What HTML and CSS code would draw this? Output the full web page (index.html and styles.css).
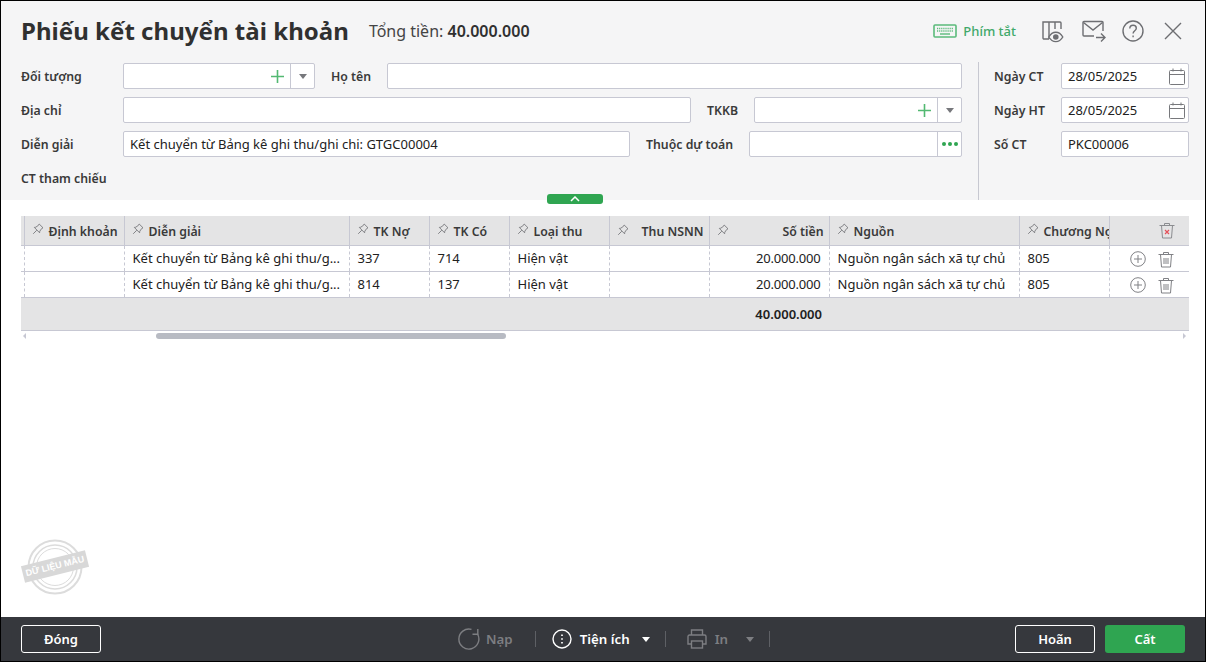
FILE: index.html
```html
<!DOCTYPE html>
<html lang="vi">
<head>
<meta charset="utf-8">
<title>Phiếu kết chuyển tài khoản</title>
<link rel="stylesheet" href="styles.css">
</head>
<body>
<div class="app">
  <header class="head">
    <div class="title-row">
      <h1 class="title">Phiếu kết chuyển tài khoản</h1>
      <div class="total">Tổng tiền: <b>40.000.000</b></div>
      <div class="tools">
        <span class="shortcut">
          <svg width="24" height="14" viewBox="0 0 24 14"><rect x="1" y="1" width="22" height="12" rx="1" fill="none" stroke="#5bbb7b" stroke-width="1.6"/><path d="M4 4.5h16M4 7h16" stroke="#5bbb7b" stroke-width="1.4" stroke-dasharray="1.2 .9"/><path d="M7 10h10" stroke="#5bbb7b" stroke-width="1.4"/></svg>
          Phím tắt
        </span>
        <svg class="t1" width="24" height="24" viewBox="0 0 24 24" fill="none" stroke="#6d6e72" stroke-width="1.4"><path d="M8 20H3a1 1 0 0 1-1-1V3h17a1 1 0 0 1 1 1v6M8 3v17M14 3v7"/><path d="M7.8 18c2-3.6 4-4.8 7-4.8s5 1.2 7 4.8c-2 3.4-4 4.6-7 4.6s-5-1.2-7-4.6z" fill="#f5f5f6" stroke-width="1.4"/><circle cx="14.8" cy="18" r="2.8" fill="#6d6e72" stroke="none"/></svg>
        <svg class="t2" width="24" height="22" viewBox="0 0 24 22" fill="none" stroke="#6d6e72" stroke-width="1.4"><path d="M21 11V2.5a1 1 0 0 0-1-1H2a1 1 0 0 0-1 1V15a1 1 0 0 0 1 1h10"/><path d="M1.5 2.5 11 10l9.5-7.500"/><path d="M14 17.500h9M19 13.500l4 4-4 4"/></svg>
        <svg class="t3" width="22" height="22" viewBox="0 0 22 22" fill="none" stroke="#6d6e72" stroke-width="1.4"><circle cx="11" cy="11" r="10"/><path d="M7.800 8.500c0-2 1.500-3.200 3.300-3.200s3.200 1.200 3.200 2.900c0 2.500-3.200 2.600-3.200 5.300"/><path d="M11.100 15.400v1.800"/></svg>
        <svg class="t4" width="20" height="20" viewBox="0 0 20 20" stroke="#6d6e72" stroke-width="1.400"><path d="M2 2l16 16M18 2 2 18"/></svg>
      </div>
    </div>
    <div class="form-wrap">
      <div class="form-left">
        <div class="row">
          <label class="lbl">Đối tượng</label>
          <div class="box w192">
            <span class="fill"></span>
            <svg class="plus" width="13" height="13" viewBox="0 0 13 13"><path d="M6.500 0v13M0 6.500h13" stroke="#53b972" stroke-width="1.600"/></svg>
            <span class="cell"><i class="caret"></i></span>
          </div>
          <label class="lbl l2 wa">Họ tên</label>
          <div class="box grow"></div>
        </div>
        <div class="row">
          <label class="lbl">Địa chỉ</label>
          <div class="box grow"></div>
          <label class="lbl l2 wb">TKKB</label>
          <div class="box w208">
            <span class="fill"></span>
            <svg class="plus" width="13" height="13" viewBox="0 0 13 13"><path d="M6.500 0v13M0 6.500h13" stroke="#53b972" stroke-width="1.600"/></svg>
            <span class="cell"><i class="caret"></i></span>
          </div>
        </div>
        <div class="row">
          <label class="lbl">Diễn giải</label>
          <div class="box grow"><span class="val">Kết chuyển từ Bảng kê ghi thu/ghi chi: GTGC00004</span></div>
          <label class="lbl l2 wc">Thuộc dự toán</label>
          <div class="box w213">
            <span class="fill"></span>
            <span class="cell"><i class="dots"></i></span>
          </div>
        </div>
        <div class="row ref"><label class="lbl">CT tham chiếu</label></div>
      </div>
      <div class="form-right">
        <div class="row">
          <label class="lbl lr">Ngày CT</label>
          <div class="box date"><span class="val fill">28/05/2025</span>
            <svg class="cal" width="16" height="17" viewBox="0 0 16 17" fill="none" stroke="#77787c"><rect x=".5" y="2.500" width="15" height="14" rx="1"/><path d="M.5 6.500h15M4 .5v3M12 .5v3"/></svg>
          </div>
        </div>
        <div class="row">
          <label class="lbl lr">Ngày HT</label>
          <div class="box date"><span class="val fill">28/05/2025</span>
            <svg class="cal" width="16" height="17" viewBox="0 0 16 17" fill="none" stroke="#77787c"><rect x=".5" y="2.500" width="15" height="14" rx="1"/><path d="M.5 6.500h15M4 .5v3M12 .5v3"/></svg>
          </div>
        </div>
        <div class="row">
          <label class="lbl lr">Số CT</label>
          <div class="box date"><span class="val">PKC00006</span></div>
        </div>
      </div>
    </div>
    <button class="collapse" type="button"><svg width="10" height="6" viewBox="0 0 10 6" fill="none" stroke="#fff" stroke-width="1.500"><path d="M1 5l4-4 4 4"/></svg></button>
  </header>

  <main class="content">
    <table class="grid">
      <colgroup>
        <col class="c0"><col class="c1"><col class="c2"><col class="c3"><col class="c3"><col class="c1"><col class="c1"><col class="c4"><col class="c5"><col class="c6"><col class="c7">
      </colgroup>
      <thead>
        <tr>
          <th></th>
          <th><svg class="pin"><use href="#pin"/></svg>Định khoản</th>
          <th><svg class="pin"><use href="#pin"/></svg>Diễn giải</th>
          <th><svg class="pin"><use href="#pin"/></svg>TK Nợ</th>
          <th><svg class="pin"><use href="#pin"/></svg>TK Có</th>
          <th><svg class="pin"><use href="#pin"/></svg>Loại thu</th>
          <th class="split"><svg class="pin"><use href="#pin"/></svg><span class="r">Thu NSNN</span></th>
          <th class="split"><svg class="pin"><use href="#pin"/></svg><span class="r">Số tiền</span></th>
          <th><svg class="pin"><use href="#pin"/></svg>Nguồn</th>
          <th class="clip"><svg class="pin"><use href="#pin"/></svg>Chương Nợ</th>
          <th class="ic">
            <svg class="trash-h" width="16" height="17" viewBox="0 0 16 17" fill="none" stroke="#8b8c90"><path d="M.5 3.500h15M5.500 3V1.500h5V3M2.500 3.500l1 12.500h9l1-12.500" stroke-width="1"/><path d="M6 8l4 4M10 8l-4 4" stroke="#e4505a" stroke-width="1.200"/></svg>
          </th>
        </tr>
      </thead>
      <tbody>
        <tr>
          <td></td><td></td><td>Kết chuyển từ Bảng kê ghi thu/g...</td><td>337</td><td>714</td><td>Hiện vật</td><td></td><td class="num">20.000.000</td><td>Nguồn ngân sách xã tự chủ</td><td>805</td>
          <td class="ic">
            <svg class="add" width="16" height="16" viewBox="0 0 16 16" fill="none" stroke="#808185"><circle cx="8" cy="8" r="7.300"/><path d="M8 4v8M4 8h8"/></svg>
            <svg class="del" width="16" height="17" viewBox="0 0 16 17" fill="none" stroke="#808185"><path d="M.5 3.500h15M5.500 3V1.500h5V3M2.500 3.500l1 12.500h9l1-12.500M6 7v6M8 7v6M10 7v6"/></svg>
          </td>
        </tr>
        <tr>
          <td></td><td></td><td>Kết chuyển từ Bảng kê ghi thu/g...</td><td>814</td><td>137</td><td>Hiện vật</td><td></td><td class="num">20.000.000</td><td>Nguồn ngân sách xã tự chủ</td><td>805</td>
          <td class="ic">
            <svg class="add" width="16" height="16" viewBox="0 0 16 16" fill="none" stroke="#808185"><circle cx="8" cy="8" r="7.300"/><path d="M8 4v8M4 8h8"/></svg>
            <svg class="del" width="16" height="17" viewBox="0 0 16 17" fill="none" stroke="#808185"><path d="M.5 3.500h15M5.500 3V1.500h5V3M2.500 3.500l1 12.500h9l1-12.500M6 7v6M8 7v6M10 7v6"/></svg>
          </td>
        </tr>
      </tbody>
      <tfoot>
        <tr>
          <td colspan="8" class="sum">40.000.000</td><td colspan="3"></td>
        </tr>
      </tfoot>
    </table>
    <div class="scroll">
      <i class="arr left"></i>
      <span class="thumb"></span>
      <i class="arr right"></i>
    </div>
    <svg class="defs" width="0" height="0"><symbol id="pin" viewBox="0 0 12 12"><path d="M7.200 1 11 4.800 9.800 5.400 7.800 8.200 7.600 9.800 2.300 4.400 3.800 4.200 6.600 2.200zM4.800 7.200 1.200 10.800" fill="none" stroke="#77787c" stroke-width=".9"/></symbol></svg>
    <div class="stamp">
      <svg width="56" height="56" viewBox="0 0 56 56" fill="none" stroke="#dcdcdc"><circle cx="28" cy="28" r="26.500" stroke-width="2"/><circle cx="28" cy="28" r="22" stroke-width="1.500"/><circle cx="28" cy="28" r="18.500" stroke-width="1"/></svg>
      <span class="stamp-text">DỮ LIỆU MẪU</span>
    </div>
  </main>

  <footer class="bar">
    <button class="btn ghost" type="button">Đóng</button>
    <div class="center">
      <span class="act off">
        <svg width="22" height="22" viewBox="0 0 22 22" fill="none" stroke="#7d7e82" stroke-width="1.400"><path d="M19.500 6A10 10 0 1 1 13.500 1.400"/><path d="M19.800 1v5.300h-5.300"/></svg>
        Nạp
      </span>
      <i class="sep s1"></i>
      <span class="act on">
        <svg width="20" height="20" viewBox="0 0 20 20" fill="none" stroke="#fff" stroke-width="1.400"><circle cx="10" cy="10" r="9"/><path d="M10 5.500v1.500M10 9.300v1.500M10 13v1.500" stroke-width="1.700"/></svg>
        Tiện ích
      </span>
      <i class="tri white"></i>
      <i class="sep s2"></i>
      <span class="act off print">
        <svg width="20" height="20" viewBox="0 0 20 20" fill="none" stroke="#7d7e82" stroke-width="1.400"><path d="M4.500 6V1h11v5M4.500 15H1V7.500a1.500 1.500 0 0 1 1.500-1.500h15A1.500 1.500 0 0 1 19 7.500V15h-3.500"/><rect x="4.500" y="12" width="11" height="7"/></svg>
        In
      </span>
      <i class="tri grey"></i>
      <i class="sep s3"></i>
    </div>
    <div class="right">
      <button class="btn ghost" type="button">Hoãn</button>
      <button class="btn green" type="button">Cất</button>
    </div>
  </footer>
</div>
</body>
</html>
```

FILE: styles.css
```css
* { box-sizing: border-box; }
html, body { margin: 0; padding: 0; }
body { font-family: "Noto Sans", "Open Sans", sans-serif; font-size: 13px; color: #212121; background: #fff; }
.app { width: 1206px; height: 662px; border: 1px solid #000; display: flex; flex-direction: column; overflow: hidden; }

.head { height: 199px; background: #f5f5f6; position: relative; flex: none; }
.title-row { height: 61px; display: flex; align-items: center; padding: 0 22px 2px 20px; }
.title { margin: 0; font-size: 24px; font-weight: 700; color: #303030; line-height: 32px; letter-spacing: .04px; }
.total { margin-left: 20px; font-size: 16px; color: #444; }
.total b { font-weight: 600; color: #303030; font-size: 16px; }
.tools { margin-left: auto; display: flex; align-items: center; }
.shortcut { display: flex; align-items: center; gap: 6px; color: #41a96a; font-weight: 500; margin-right: 25px; }
.t2 { margin-left: 17px; }
.t3 { margin-left: 16px; }
.t4 { margin-left: 19px; }

.form-wrap { display: flex; height: 138px; }
.form-left { width: 978px; padding: 1px 16px 0 20px; border-right: 1px solid #c7c8d1; }
.form-right { flex: 1; padding: 1px 16px 0 15px; }
.row { display: flex; align-items: center; height: 26px; margin-bottom: 8px; }
.ref { height: 26px; margin-bottom: 0; }
.lbl { font-weight: 600; color: #3a3a3a; flex: none; width: 102px; font-size: 12.300px; }
.l2 { margin-left: 16px; }
.wa { width: 56px; }
.wb { width: 47px; }
.wc { width: 103px; }
.lr { width: 67px; }

.box { height: 26px; background: #fff; border: 1px solid #c7c8d3; border-radius: 2px; display: flex; align-items: center; flex: none; }
.grow { flex: 1; }
.fill { flex: 1; }
.w192 { width: 192px; }
.w208 { width: 208px; }
.w213 { width: 213px; }
.date { width: 128px; }
.val { padding-left: 6px; color: #212121; white-space: nowrap; }
.plus { margin-right: 6px; }
.cal { margin-right: 3px; }
.cell { width: 24px; height: 24px; border-left: 1px solid #c7c8d3; display: flex; align-items: center; justify-content: center; }
.caret { width: 0; height: 0; border-left: 4px solid transparent; border-right: 4px solid transparent; border-top: 5px solid #77787c; }
.dots { width: 4px; height: 4px; border-radius: 50%; background: #2fa551; box-shadow: -6px 0 #2fa551, 6px 0 #2fa551; }

.collapse { position: absolute; left: 546px; bottom: -4px; width: 56px; height: 10px; padding: 0; border: 0; border-radius: 3px 3px 3px 3px; background: #2fa551; display: flex; align-items: center; justify-content: center; }

.content { flex: 1; position: relative; padding: 16px 16px 0 20px; }
.grid { width: 1168px; table-layout: fixed; border-collapse: collapse; }
.c0 { width: 3px; } .c1 { width: 100px; } .c2 { width: 225px; } .c3 { width: 80px; } .c4 { width: 120px; } .c5 { width: 190px; } .c6 { width: 90px; } .c7 { width: 80px; }
.grid th { height: 29px; background: #e4e4e5; font-weight: 600; font-size: 12.300px; color: #3a3a3a; text-align: left; padding: 2px 0 0 7px; border-right: 1px solid #c7c8d3; border-bottom: 1px solid #c7c8d3; white-space: nowrap; overflow: hidden; }
.grid th:first-child, .grid td:first-child { padding: 0; }
.grid th:last-child { border-right: 0; }
.pin { width: 12px; height: 12px; margin-right: 5px; vertical-align: -1px; position: relative; top: -2px; }
.split .r { float: right; padding-right: 5px; }
.split .pin { float: left; top: 0; margin-top: 1px; }
.grid td { height: 26px; padding: 0 0 0 8px; border-right: 1px dashed #c7c8d3; border-bottom: 1px solid #c7c8d3; white-space: nowrap; overflow: hidden; }
.grid td:last-child { border-right: 0; }
.grid .num { text-align: right; padding: 0 8px 0 0; letter-spacing: -.2px; }
.grid .ic { text-align: left; padding: 0; }
.grid th.ic { text-align: right; padding-right: 14px; }
.trash-h { display: inline-block; vertical-align: middle; }
.add { margin-left: 20px; vertical-align: middle; }
.del { margin-left: 9px; vertical-align: middle; }
.grid tfoot td { height: 33px; background: #e4e4e5; border-right: 0; font-weight: 600; color: #212121; }
.grid tfoot .sum { text-align: right; padding: 0 7px 0 0; }

.scroll { height: 8px; margin-top: 1px; position: relative; display: flex; align-items: center; }
.thumb { width: 350px; height: 6px; border-radius: 3px; background: #b8bbc3; margin-left: 135px; }
.arr { width: 0; height: 0; border-top: 3px solid transparent; border-bottom: 3px solid transparent; }
.arr.left { border-right: 3px solid #c7c8d3; margin-left: 2px; position: absolute; left: 0; }
.arr.right { border-left: 3px solid #c7c8d3; position: absolute; right: 3px; }
.defs { position: absolute; }

.stamp { position: absolute; left: 26px; top: 339px; width: 56px; height: 56px; }
.stamp svg { display: block; }
.stamp-text { position: absolute; left: -5px; top: 19px; width: 66px; height: 17px; line-height: 17px; background: #d8d8d8; color: #fff; font-family: "Liberation Sans", sans-serif; font-size: 9px; font-weight: 700; text-align: center; transform: rotate(-14deg); white-space: nowrap; }

.bar { height: 44px; flex: none; background: #36383d; display: flex; align-items: center; padding: 0 20px; position: relative; }
.btn { width: 80px; height: 28px; border-radius: 3px; font-family: inherit; font-size: 13px; font-weight: 600; cursor: pointer; padding: 0; color: #fff; }
.ghost { background: transparent; border: 1px solid #fff; }
.green { background: #2fa551; border: 0; margin-left: 10px; }
.right { margin-left: auto; display: flex; }
.center { display: flex; align-items: center; position: absolute; left: 457px; top: 0; height: 100%; }
.act { display: flex; align-items: center; gap: 6px; font-weight: 600; font-size: 13.300px; }
.off { color: #7d7e82; }
.on { color: #fff; gap: 8px; }
.print { gap: 8px; margin-left: 0; }
.sep { width: 1px; height: 16px; background: #5e6065; }
.s1 { margin: 0 16px 0 22px; }
.s2 { margin: 0 21px 0 15px; }
.s3 { margin-left: 15px; }
.tri { width: 0; height: 0; border-left: 4.500px solid transparent; border-right: 4.500px solid transparent; margin-left: 12px; }
.tri.white { border-top: 5px solid #fff; }
.tri.grey { border-top: 5px solid #7d7e82; margin-left: 18px; }
```
